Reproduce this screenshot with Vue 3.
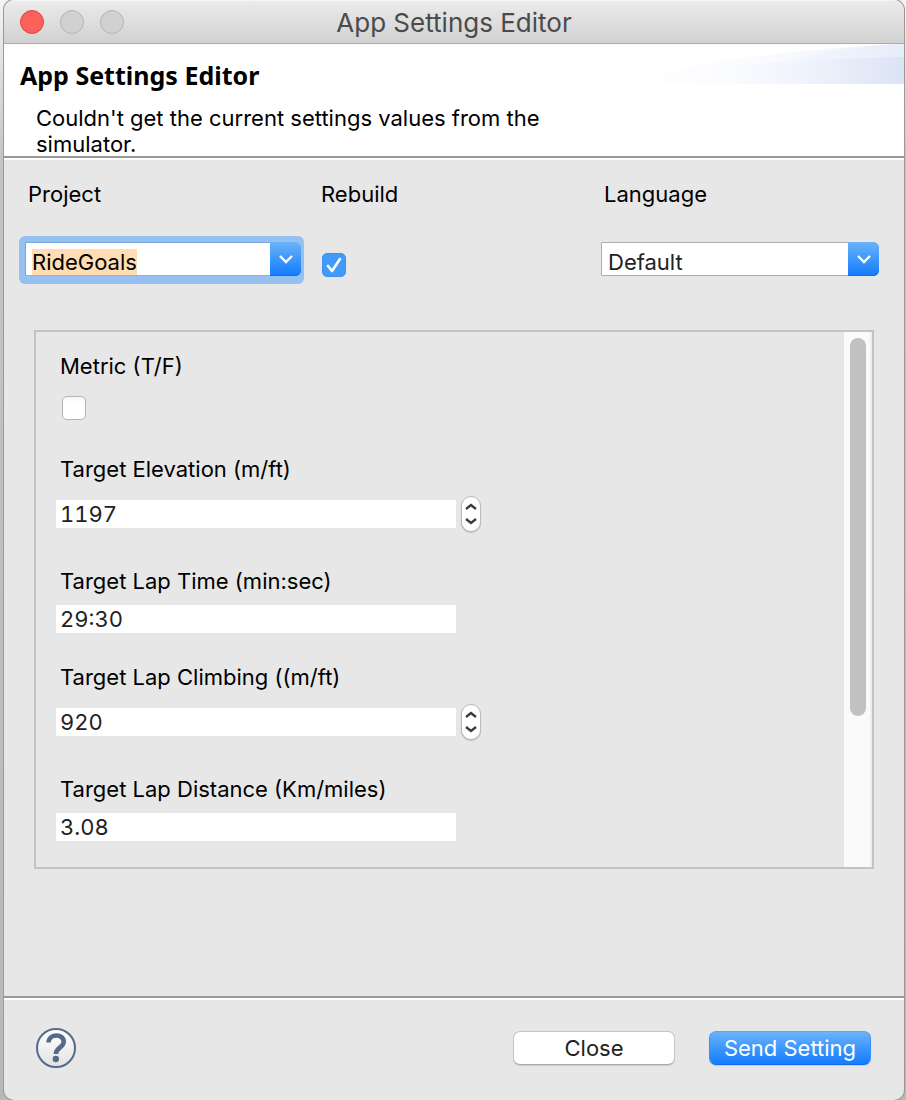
<script setup>
import { onMounted, ref } from 'vue'

const project = ref('RideGoals')
const rebuild = ref(true)
const language = ref('Default')
const projectInput = ref(null)

const fields = ref([
  { id: 'metric', type: 'toggle', label: 'Metric (T/F)', value: false },
  { id: 'elevation', type: 'number', label: 'Target Elevation (m/ft)', value: '1197' },
  { id: 'lap-time', type: 'text', label: 'Target Lap Time (min:sec)', value: '29:30' },
  { id: 'climbing', type: 'number', label: 'Target Lap Climbing ((m/ft)', value: '920' },
  { id: 'distance', type: 'text', label: 'Target Lap Distance (Km/miles)', value: '3.08' },
])

function step(field, amount) {
  field.value = String(Number(field.value) + amount)
}

onMounted(() => {
  projectInput.value.focus()
  projectInput.value.select()
})
</script>

<template>
  <div class="desktop">
    <main class="window">
      <header class="titlebar">
        <div class="lights">
          <button class="light close" type="button" aria-label="Close window"></button>
          <button class="light" type="button" aria-label="Minimize window" disabled></button>
          <button class="light" type="button" aria-label="Zoom window" disabled></button>
        </div>
        <div class="window-title">App Settings Editor</div>
      </header>

      <section class="banner">
        <svg class="swoosh" viewBox="0 0 280 40" preserveAspectRatio="none" aria-hidden="true">
          <defs>
            <linearGradient id="fade-soft" x1="0" x2="1" y1="0" y2="0">
              <stop offset="0" stop-color="#ffffff" />
              <stop offset="0.5" stop-color="#fafbfe" />
              <stop offset="1" stop-color="#eef2fc" />
            </linearGradient>
            <linearGradient id="fade-mid" x1="0" x2="1" y1="0" y2="0">
              <stop offset="0" stop-color="#f8faff" />
              <stop offset="1" stop-color="#e6ecf9" />
            </linearGradient>
            <linearGradient id="fade-deep" x1="0" x2="1" y1="0" y2="0">
              <stop offset="0" stop-color="#ffffff" />
              <stop offset="0.35" stop-color="#fbfcff" />
              <stop offset="0.65" stop-color="#eff3fc" />
              <stop offset="1" stop-color="#dce3f5" />
            </linearGradient>
          </defs>
          <path d="M0 40C60 20 150 6 280 0V40Z" fill="url(#fade-soft)" />
          <path d="M140 24C180 9 220 3 280 0V40H140Z" fill="url(#fade-mid)" />
          <path d="M0 40C70 24 150 15 280 13V40Z" fill="url(#fade-deep)" />
        </svg>
        <h1>App Settings Editor</h1>
        <p>Couldn't get the current settings values from the simulator.</p>
      </section>

      <section class="content">
        <div class="options">
          <label for="project">Project</label>
          <label for="rebuild">Rebuild</label>
          <label for="language">Language</label>

          <div class="combo focused">
            <input id="project" ref="projectInput" v-model="project" type="text" role="combobox" aria-expanded="false" />
            <button class="drop" type="button" aria-label="Show projects">
              <svg viewBox="0 0 16 10"><path d="M2 2L8 8L14 2" /></svg>
            </button>
          </div>
          <div class="rebuild">
            <input id="rebuild" v-model="rebuild" class="check" type="checkbox" />
            <svg class="tick" viewBox="0 0 24 24" aria-hidden="true"><path d="M6 13L10 18L18 6" /></svg>
          </div>
          <div class="combo">
            <select id="language" v-model="language">
              <option>Default</option>
            </select>
            <span class="drop" aria-hidden="true">
              <svg viewBox="0 0 16 10"><path d="M2 2L8 8L14 2" /></svg>
            </span>
          </div>
        </div>

        <div class="panel">
          <form class="fields" @submit.prevent>
            <div v-for="field in fields" :key="field.id" class="field" :class="field.type">
              <label :for="field.id">{{ field.label }}</label>
              <input v-if="field.type === 'toggle'" :id="field.id" v-model="field.value" class="check" type="checkbox" />
              <div v-else class="entry">
                <input :id="field.id" v-model="field.value" type="text" />
                <div v-if="field.type === 'number'" class="stepper">
                  <button type="button" :aria-label="'Increase ' + field.label" @click="step(field, 1)">
                    <svg viewBox="0 0 12 8"><path d="M1 6L6 2L11 6" /></svg>
                  </button>
                  <button type="button" :aria-label="'Decrease ' + field.label" @click="step(field, -1)">
                    <svg viewBox="0 0 12 8"><path d="M1 2L6 6L11 2" /></svg>
                  </button>
                </div>
              </div>
            </div>
          </form>
          <div class="track"><div class="thumb"></div></div>
        </div>
      </section>

      <footer class="actions">
        <button class="help" type="button" aria-label="Help">
          <svg viewBox="0 0 40 40">
            <defs>
              <linearGradient id="help-fill" x1="0" x2="0" y1="0" y2="1">
                <stop offset="0" stop-color="#ffffff" />
                <stop offset="1" stop-color="#e2e2e2" />
              </linearGradient>
            </defs>
            <circle cx="20" cy="20" r="19" fill="url(#help-fill)" stroke="#546a8a" stroke-width="2" />
            <path d="M12.5 14.5C13 5 28 5.500 27.700 14C27.500 19.500 20 19.500 20 26" fill="none" stroke="#546a8a" stroke-width="4.600" />
            <circle cx="19.800" cy="31" r="3.200" fill="#546a8a" />
          </svg>
        </button>
        <button class="push" type="button">Close</button>
        <button class="push primary" type="button">Send Setting</button>
      </footer>
    </main>
  </div>
</template>

<style>
body {
  margin: 0;
}
</style>

<style scoped>
* {
  box-sizing: border-box;
}

.desktop {
  min-height: 100vh;
  padding: 0 2px 0 4px;
  display: flex;
  background: linear-gradient(#f4f4f4, #c4c4c4 160px, #b8b8b8);
  font-family: Inter, "Liberation Sans", sans-serif;
  font-size: 22px;
  line-height: 26px;
  color: #000;
}

.window {
  flex: 1;
  min-width: 0;
  display: flex;
  flex-direction: column;
  border-radius: 10px;
  background: #e7e7e7;
  box-shadow: 0 0 0 1px #999;
  overflow: hidden;
}

button,
input,
select {
  margin: 0;
  padding: 0;
  border: 0;
  border-radius: 0;
  outline: 0;
  appearance: none;
  font: inherit;
  color: #222;
}

.titlebar {
  height: 44px;
  padding: 0 16px;
  display: grid;
  grid-template-columns: 1fr auto 1fr;
  align-items: center;
  border-top: 1px solid #f6f6f6;
  border-bottom: 1px solid #acacac;
  background: linear-gradient(#ebebeb, #d1d1d1);
}

.lights {
  display: flex;
  gap: 16px;
}

.light {
  width: 24px;
  height: 24px;
  border: 1px solid #b3b3b3;
  border-radius: 50%;
  background: #d1d1d1;
}

.light.close {
  border-color: #e2453f;
  background: #fc605b;
}

.window-title {
  padding-top: 2px;
  font-size: 26px;
  color: #4b4b4b;
}

.banner {
  position: relative;
  height: 114px;
  padding: 16px 16px 0;
  border-bottom: 2px solid #999;
  background: #fff;
}

.swoosh {
  position: absolute;
  top: 0;
  right: 0;
  width: 280px;
  height: 40px;
}

h1 {
  position: relative;
  margin: 0 0 15px;
  font-family: "Noto Sans", "Open Sans", sans-serif;
  font-size: 25px;
  line-height: 30px;
  font-weight: 700;
}

p {
  max-width: 560px;
  margin: 0;
  padding-left: 16px;
}

.content {
  flex: 1;
  padding: 21px 0 0;
  border-top: 2px solid #fff;
}

.options {
  padding: 0 25px 0 16px;
  display: grid;
  grid-template-columns: minmax(0, 301fr) minmax(0, 280fr) minmax(0, 278fr);
  row-gap: 35px;
}

.options > label {
  padding-left: 8px;
}

.options > label:nth-child(2) {
  padding-left: 0;
}

.options > label:nth-child(3) {
  padding-left: 3px;
}

.combo {
  position: relative;
  height: 34px;
  display: flex;
}

.combo input,
.combo select {
  flex: 1;
  min-width: 0;
  padding: 6px 6px 0;
  border: 1px solid #adadad;
  background: #fff;
}

.combo select {
  padding-right: 36px;
  border-radius: 0 6px 6px 0;
}

.combo select + .drop {
  position: absolute;
  top: 0;
  right: 0;
  pointer-events: none;
}

.combo.focused {
  height: 48px;
  margin: -6px 17px -8px -1px;
  padding: 6px 3px 8px 6px;
  border-radius: 6px;
  background: #96c0f0;
}

.focused input {
  border-right: 0;
  border-color: #76a6dc #76a6dc #adadad;
  color: #000;
}

.focused input::selection {
  background: #ffddb4;
  color: #000;
}

.drop {
  width: 31px;
  height: 34px;
  display: grid;
  place-items: center;
  border-radius: 0 6px 6px 0;
  background: linear-gradient(#6cb3fa, #3d97fb 50%, #147cff);
  box-shadow: inset 0 -1px 0 #0f6aee;
}

.drop svg {
  width: 16px;
  height: 10px;
  fill: none;
  stroke: #fff;
  stroke-width: 2.4;
}

.rebuild {
  position: relative;
  height: 34px;
  padding: 11px 0 0 1px;
}

.check {
  display: block;
  width: 24px;
  height: 24px;
  border: 1px solid #b4b4b4;
  border-radius: 5px;
  background: linear-gradient(#f6f6f6, #fff 6px);
}

.rebuild .check:checked {
  border-color: #3990f8;
  background: #409bfb;
}

.tick {
  position: absolute;
  top: 11px;
  left: 1px;
  width: 24px;
  height: 24px;
  fill: none;
  stroke: #fff;
  stroke-width: 2.6;
  stroke-linecap: round;
  stroke-linejoin: round;
  pointer-events: none;
  visibility: hidden;
}

.check:checked + .tick {
  visibility: visible;
}

.panel {
  margin: 54px 30px 0;
  display: flex;
  border: 2px solid #c3c3c3;
}

.fields {
  flex: 1;
  padding: 21px 20px 26px;
}

.field {
  display: flex;
  flex-direction: column;
  gap: 14px;
  margin-bottom: 36px;
}

.field.text {
  gap: 11px;
  margin-bottom: 31px;
}

.field.toggle {
  gap: 17px;
}

.field:last-child {
  margin-bottom: 0;
}

.field label {
  padding-left: 4px;
}

.field > .check {
  margin-left: 6px;
}

.entry {
  display: flex;
  align-items: center;
  gap: 5px;
}

.entry input {
  width: 400px;
  height: 28px;
  padding: 0 4px;
  background: #fff;
  font-variant-numeric: tabular-nums;
}

.stepper {
  width: 20px;
  height: 36px;
  padding: 3px 0;
  display: flex;
  flex-direction: column;
  border: 1px solid #bbb;
  border-radius: 10px;
  background: #fff;
  box-shadow: 0 1px 1px #bbb;
}

.stepper button {
  flex: 1;
  display: grid;
  place-items: center;
  background: none;
}

.stepper svg {
  width: 12px;
  height: 8px;
  fill: none;
  stroke: #3c3c3c;
  stroke-width: 2.4;
}

.track {
  width: 28px;
  padding: 6px 4px 0 6px;
  border-right: 2px solid #eee;
  background: #fafafa;
}

.thumb {
  width: 16px;
  height: 71.5%;
  border-radius: 8px;
  background: #c1c1c1;
}

.actions {
  height: 104px;
  padding: 0 33px 3px 32px;
  display: flex;
  align-items: center;
  border-top: 2px solid #999;
  box-shadow: inset 0 2px 0 #fff;
}

.help {
  width: 40px;
  height: 40px;
  margin-right: auto;
  border-radius: 50%;
  background: none;
}

.help svg {
  display: block;
}

.push {
  width: 162px;
  height: 34px;
  padding-top: 1px;
  border: 1px solid #c6c6c6;
  border-bottom-color: #aaa;
  border-radius: 7px;
  background: #fff;
  box-shadow: 0 1px 1px #ccc;
}

.primary {
  margin-left: 34px;
  border-color: #5aa5f6 #3c90fa #0f6aee;
  background: linear-gradient(#6cb3fa, #3d97fb 50%, #147cff);
  color: #fff;
}
</style>
